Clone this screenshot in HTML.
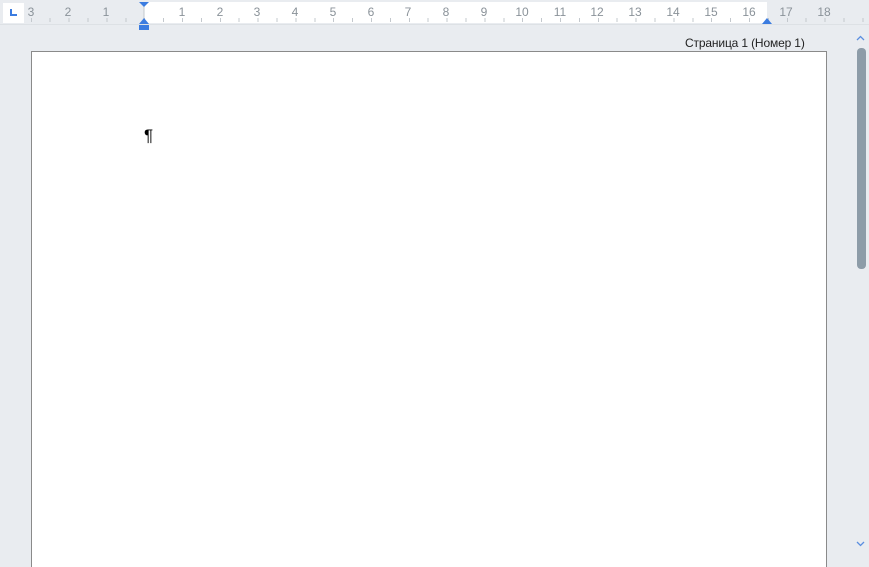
<!DOCTYPE html>
<html><head><meta charset="utf-8"><style>
*{margin:0;padding:0;box-sizing:border-box}
html,body{width:869px;height:567px;overflow:hidden}
body{background:#e9ecf0;font-family:"Liberation Sans",sans-serif;position:relative}
.ruler{position:absolute;left:0;top:0;width:869px;height:25px;background:#e9ecf0;border-bottom:1px solid #dde1e5}
.white{position:absolute;left:144px;top:2px;width:623px;height:21px;background:#fff}
.ticks{position:absolute;left:0;top:18px;width:869px;height:4px;background:repeating-linear-gradient(90deg,transparent 0,transparent 11.9px,#c3c8cd 11.9px,#c3c8cd 12.9px,transparent 12.9px,transparent 18.9px)}
.n{position:absolute;top:5px;font-size:12px;color:#8a9299;width:20px;margin-left:-10px;text-align:center}
.corner{position:absolute;left:3px;top:3px;width:21px;height:20px;background:#fff}
.corner:after{content:"";position:absolute;left:7px;top:6px;width:5px;height:5px;border-left:2px solid #3b7ce0;border-bottom:2px solid #3b7ce0}
.page{position:absolute;left:31px;top:51px;width:796px;height:520px;background:#fff;border:1px solid #8a8a8a}
.lbl{position:absolute;left:685px;top:36px;font-size:12px;color:#222;letter-spacing:-0.15px}
.thumb{position:absolute;left:857px;top:48px;width:9px;height:221px;background:#8d9ca8;border-radius:4px}
</style></head><body>
<div class="ruler">
<div class="white"></div>
<div class="ticks"></div>
<div class="corner"></div>
<div class="n" style="left:31px">3</div>
<div class="n" style="left:68px">2</div>
<div class="n" style="left:106px">1</div>
<div class="n" style="left:182px">1</div>
<div class="n" style="left:220px">2</div>
<div class="n" style="left:257px">3</div>
<div class="n" style="left:295px">4</div>
<div class="n" style="left:333px">5</div>
<div class="n" style="left:371px">6</div>
<div class="n" style="left:408px">7</div>
<div class="n" style="left:446px">8</div>
<div class="n" style="left:484px">9</div>
<div class="n" style="left:522px">10</div>
<div class="n" style="left:560px">11</div>
<div class="n" style="left:597px">12</div>
<div class="n" style="left:635px">13</div>
<div class="n" style="left:673px">14</div>
<div class="n" style="left:711px">15</div>
<div class="n" style="left:749px">16</div>
<div class="n" style="left:786px">17</div>
<div class="n" style="left:824px">18</div>
<svg style="position:absolute;left:0;top:0" width="869" height="32">
<line x1="144" y1="2" x2="144" y2="22" stroke="#c3c8cd"/>
<polygon points="139,2 149,2 144,7" fill="#3b7ce0"/>
<polygon points="139,24 149,24 144,18" fill="#3b7ce0"/>
<rect x="139" y="25" width="10" height="5" fill="#3b7ce0"/>
<polygon points="762,24 772,24 767,18" fill="#3b7ce0"/>
</svg>
</div>
<div class="lbl">Страница 1 (Номер 1)</div>
<div class="page"><div style="position:absolute;left:112px;top:74px;font-size:17px;color:#000">¶</div></div>
<svg style="position:absolute;left:855px;top:33px" width="12" height="10"><polyline points="2,7 5.5,3.5 9,7" fill="none" stroke="#5b8fe0" stroke-width="1.3"/></svg>
<svg style="position:absolute;left:855px;top:539px" width="12" height="10"><polyline points="2,3 5.5,6.5 9,3" fill="none" stroke="#5b8fe0" stroke-width="1.3"/></svg>
<div class="thumb"></div>
</body></html>
